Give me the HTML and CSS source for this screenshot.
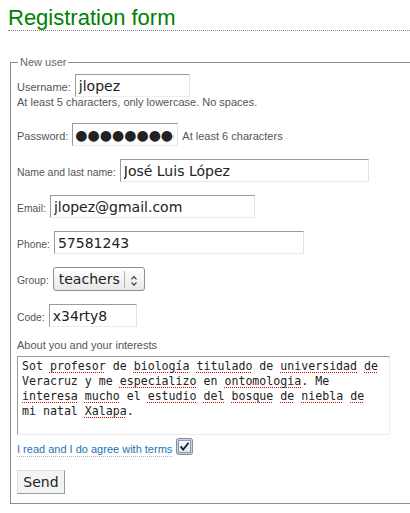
FILE: index.html
```html
<!DOCTYPE html>
<html lang="en">
<head>
<meta charset="utf-8">
<title>Registration form</title>
<link rel="stylesheet" href="styles.css">
</head>
<body>
<h1 class="title">Registration form</h1>
<form class="form">
  <fieldset class="fieldset">
    <legend class="legend">New user</legend>
    <div class="field field-first">
      <label class="label" for="username">Username:</label>
      <input class="input w-user" id="username" type="text" value="jlopez">
    </div>
    <p class="hint">At least 5 characters, only lowercase. No spaces.</p>
    <div class="field field-pass">
      <label class="label" for="password">Password:</label>
      <input class="input w-pass" id="password" type="text" value="●●●●●●●●●" aria-label="Password (hidden)">
      <span class="hint-inline">At least 6 characters</span>
    </div>
    <div class="field">
      <label class="label label-sm" for="fullname">Name and last name:</label>
      <input class="input w-name" id="fullname" type="text" value="José Luis López">
    </div>
    <div class="field">
      <label class="label label-sm" for="email">Email:</label>
      <input class="input w-email" id="email" type="text" value="jlopez@gmail.com">
    </div>
    <div class="field">
      <label class="label label-sm" for="phone">Phone:</label>
      <input class="input w-phone" id="phone" type="text" value="57581243">
    </div>
    <div class="field">
      <label class="label label-sm" for="group">Group:</label>
      <span class="select-wrap">
        <select class="select" id="group">
          <option>teachers</option>
        </select>
        <svg class="select-icon" viewBox="0 0 21 24" width="21" height="24" aria-hidden="true">
          <line x1="1.5" y1="4" x2="1.5" y2="21" stroke="#b4b4b4" stroke-width="1"/>
          <path d="M8.5 12.3 L11 9.6 L13.5 12.3" fill="none" stroke="#333" stroke-width="1.2"/>
          <path d="M8.5 15.4 L11 18.1 L13.5 15.4" fill="none" stroke="#333" stroke-width="1.2"/>
        </svg>
      </span>
    </div>
    <div class="field">
      <label class="label label-sm" for="code">Code:</label>
      <input class="input w-code" id="code" type="text" value="x34rty8">
    </div>
    <label class="label about-label" for="about">About you and your interests</label>
    <div class="textarea" id="about" role="textbox" aria-multiline="true">Sot <span class="typo">profesor</span> de <span class="typo">biología</span> <span class="typo">titulado</span> de <span class="typo">universidad</span> <span class="typo">de</span><br>Veracruz y me <span class="typo">especializo</span> en <span class="typo">ontomologia</span>. Me<br><span class="typo">interesa</span> <span class="typo">mucho</span> el <span class="typo">estudio</span> <span class="typo">del</span> <span class="typo">bosque</span> <span class="typo">de</span> <span class="typo">niebla</span> <span class="typo">de</span><br>mi natal <span class="typo">Xalapa</span>.</div>
    <div class="agree">
      <label class="agree-label" for="terms">I read and I do agree with terms</label>
      <svg class="checkbox" id="terms" role="checkbox" aria-checked="true" viewBox="0 0 17 17" width="17" height="17">
        <defs>
          <linearGradient id="cbfill" x1="0" y1="0" x2="0" y2="1">
            <stop offset="0" stop-color="#ffffff"/>
            <stop offset="1" stop-color="#dde3ea"/>
          </linearGradient>
        </defs>
        <rect x="0.5" y="0.5" width="16" height="16" rx="2" fill="#c8d2de" stroke="#7c8da5"/>
        <rect x="2.5" y="2.5" width="12" height="12" fill="url(#cbfill)" stroke="#8d9bb0"/>
        <path d="M4.6 8.4 L7.2 11.6 L12.6 4.8" fill="none" stroke="#1e1e1e" stroke-width="1.8"/>
      </svg>
    </div>
    <button class="button" type="button">Send</button>
  </fieldset>
</form>
</body>
</html>
```

FILE: styles.css
```css
html {
  background: #fff;
}

body {
  margin: 5px 0 0 8px;
  font-family: "Liberation Sans", Arial, sans-serif;
  color: #555;
}

.title {
  margin: 0;
  font: normal 22px/25px "Liberation Sans", Arial, sans-serif;
  color: #008000;
  border-bottom: 1px dotted #888;
}

.form {
  margin: 25px 0 0;
}

.fieldset {
  margin: 0 0 0 2px;
  padding: 5px 0 9px 6px;
  border: 1px solid #8c8c8c;
  border-right: 0;
  min-width: 0;
}

.legend {
  margin-left: 1px;
  padding: 0 2px;
  font-size: 11px;
  line-height: 13px;
  color: #666;
}

.field {
  display: flex;
  align-items: baseline;
  gap: 4px;
  margin-top: 13px;
}

.field-first {
  margin-top: 0;
}

.field-pass {
  margin-top: 15px;
}

.label {
  font-size: 11px;
  color: #555;
}

.label-sm {
  font-size: 10.4px;
}

.hint {
  margin: 0;
  font-size: 11px;
  line-height: 11px;
  color: #555;
}

.hint-inline {
  font-size: 11px;
  color: #555;
}

.input {
  box-sizing: border-box;
  height: 23px;
  margin: 0;
  padding: 0 3px;
  border: 1px solid;
  border-color: #9a9a9a #e2e2e2 #ececec #9a9a9a;
  background: #fff;
  font: 14px "DejaVu Sans", sans-serif;
  color: #222;
  outline: none;
}

.w-user { width: 115px; }
.w-pass { width: 106px; padding-left: 2px; }
.w-name { width: 249px; }
.w-email { width: 205px; }
.w-phone { width: 250px; }
.w-code { width: 88px; }

.select-wrap {
  position: relative;
  display: inline-flex;
}

.select {
  -webkit-appearance: none;
  appearance: none;
  box-sizing: border-box;
  width: 92px;
  height: 24px;
  margin: 0;
  padding: 0 22px 0 5px;
  border: 1px solid #8f8f8f;
  border-radius: 3px;
  background: linear-gradient(#ffffff, #e8e8e8);
  font: 14px "DejaVu Sans", sans-serif;
  color: #222;
}

.select-icon {
  position: absolute;
  left: 70px;
  top: 0;
  pointer-events: none;
}

.about-label {
  display: block;
  margin-top: 12px;
  line-height: 13px;
}

.textarea {
  box-sizing: border-box;
  width: 373px;
  height: 79px;
  margin-top: 4px;
  padding: 2px 4px;
  border: 1px solid;
  border-color: #9a9a9a #ececec #ececec #9a9a9a;
  background: #fff;
  font: 11.6px/15px "DejaVu Sans Mono", monospace;
  color: #222;
  white-space: nowrap;
  overflow: hidden;
}

.typo {
  text-decoration: underline dotted #e00000;
  text-decoration-thickness: 1px;
  text-underline-offset: 2px;
}

.agree {
  display: flex;
  align-items: flex-end;
  gap: 4px;
  margin-top: 3px;
}

.agree-label {
  font-size: 11px;
  line-height: 13px;
  color: #1f72b4;
  border-bottom: 1px dotted #a9b8c8;
}

.checkbox {
  display: block;
  margin-bottom: 2px;
}

.button {
  display: block;
  box-sizing: border-box;
  width: 48px;
  height: 24px;
  margin-top: 13px;
  padding: 0;
  border: 1px solid;
  border-color: #dcdcdc #9a9a9a #9a9a9a #dcdcdc;
  background: #f3f3f3;
  font: 14px "DejaVu Sans", sans-serif;
  color: #222;
}
```
